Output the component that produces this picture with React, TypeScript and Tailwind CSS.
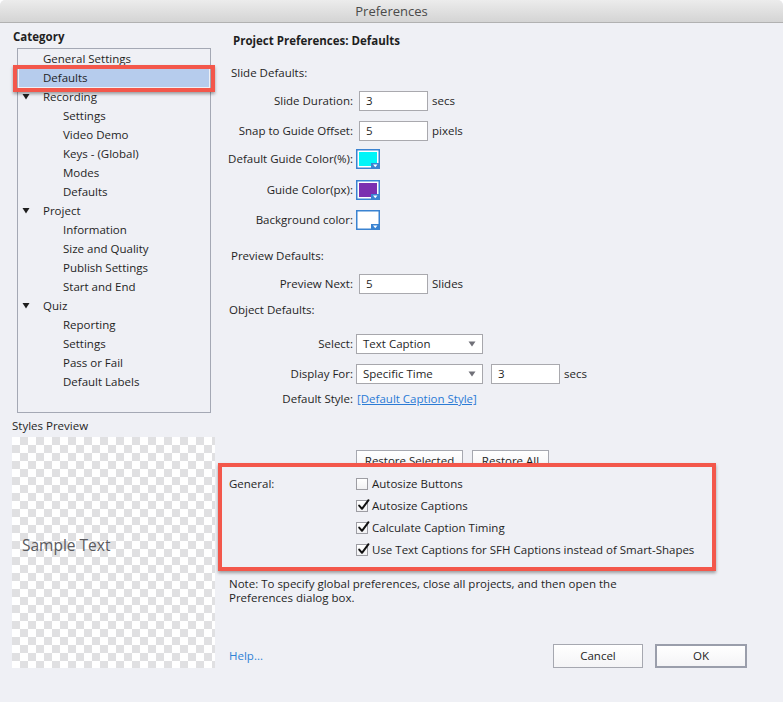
import React from "react";

type TreeItem = { label: string; level: 1 | 2; parent?: boolean; selected?: boolean };

const tree: TreeItem[] = [
  { label: "General Settings", level: 1 },
  { label: "Defaults", level: 1, selected: true },
  { label: "Recording", level: 1, parent: true },
  { label: "Settings", level: 2 },
  { label: "Video Demo", level: 2 },
  { label: "Keys - (Global)", level: 2 },
  { label: "Modes", level: 2 },
  { label: "Defaults", level: 2 },
  { label: "Project", level: 1, parent: true },
  { label: "Information", level: 2 },
  { label: "Size and Quality", level: 2 },
  { label: "Publish Settings", level: 2 },
  { label: "Start and End", level: 2 },
  { label: "Quiz", level: 1, parent: true },
  { label: "Reporting", level: 2 },
  { label: "Settings", level: 2 },
  { label: "Pass or Fail", level: 2 },
  { label: "Default Labels", level: 2 },
];

function Triangle() {
  return (
    <svg width="8" height="7" viewBox="0 0 8 7" className="block">
      <path d="M0.5 1 H7.5 L4 6.5 Z" fill="#1e1e1e" />
    </svg>
  );
}

function Swatch({ color }: { color: string }) {
  return (
    <svg width="24" height="20" viewBox="0 0 24 20" className="block">
      <rect x="0.75" y="0.75" width="22.5" height="18.5" fill="#ffffff" stroke="#3a83d1" strokeWidth="1.5" />
      <rect x="3" y="3" width="18" height="14" fill={color} />
      <rect x="15" y="14" width="8.5" height="5.5" fill="#3a83d1" />
      <path d="M17 15.5 H21.5 L19.25 18.2 Z" fill="#ffffff" />
    </svg>
  );
}

function TextInput({ value, w = "w-[69px]" }: { value: string; w?: string }) {
  return (
    <div className={`h-[20px] ${w} border border-[#a9a9ae] bg-white pl-[6px] flex items-center leading-none`}>
      {value}
    </div>
  );
}

function Dropdown({ value }: { value: string }) {
  return (
    <div className="h-[20px] w-[127px] border border-[#a7a7ac] bg-white pl-[6px] pr-[6px] flex items-center justify-between leading-none">
      <span>{value}</span>
      <svg width="8" height="6" viewBox="0 0 8 6" className="block">
        <path d="M0.5 0.5 H7.5 L4 5.5 Z" fill="#707078" />
      </svg>
    </div>
  );
}

function Checkbox({ checked }: { checked: boolean }) {
  return (
    <div className="relative w-[12px] h-[12px] border border-[#9d9da3] bg-gradient-to-b from-white to-[#f1f1f3]">
      {checked && (
        <svg width="14" height="14" viewBox="0 0 14 14" className="absolute left-[0px] top-[-3px]">
          <path d="M2.2 7.6 L5 10.8 L11.5 2.2" fill="none" stroke="#111" strokeWidth="2" strokeLinecap="round" strokeLinejoin="round" />
        </svg>
      )}
    </div>
  );
}

function Label({ children }: { children: React.ReactNode }) {
  return <div className="w-[136px] text-right pr-[1px] shrink-0">{children}</div>;
}

function Button({ children, w, strong }: { children: React.ReactNode; w: string; strong?: boolean }) {
  return (
    <div
      className={`${w} h-[24px] flex items-center justify-center bg-gradient-to-b from-white to-[#f4f4f6] ${
        strong ? "border-2 border-[#9a9eab]" : "border border-[#a6a8b0]"
      }`}
    >
      {children}
    </div>
  );
}

export default function App() {
  return (
    <div className="w-[783px] h-[702px] bg-white font-['Open_Sans',sans-serif] text-[11.5px] text-[#1f1f1f] leading-[16px] overflow-hidden">
      <div className="w-full h-full bg-[#eff0f5] rounded-t-[5px] flex flex-col overflow-hidden">
        {/* Title bar */}
        <div className="h-[23px] shrink-0 bg-gradient-to-b from-[#ececec] to-[#d4d4d4] border-b border-[#b1b1b1] flex items-center justify-center text-[13px] text-[#4a4a4a] rounded-t-[5px]">
          Preferences
        </div>

        <div className="flex flex-1">
          {/* Left column */}
          <div className="w-[218px] shrink-0 flex flex-col">
            <div className="ml-[13px] mt-[6px] h-[16px] font-bold">Category</div>
            <div className="ml-[17px] mt-[3px] w-[194px] h-[365px] border border-[#a4a8b4] pt-0">
              {tree.map((item, i) => (
                <div key={i} className="relative h-[19px] flex items-center">
                  {item.selected && (
                    <>
                      <div className="absolute left-[1px] right-[1px] top-0 bottom-0 bg-[#b6cced]" />
                      <div className="absolute left-[-5px] w-[202px] top-[-3px] h-[27px] border-[4px] border-[#f3574b] shadow-[0_2px_3px_rgba(0,0,0,0.35)]" />
                    </>
                  )}
                  <div className="relative flex items-center">
                    <div className="w-[25px] pl-[4px] flex items-center">{item.parent && <Triangle />}</div>
                    {item.level === 2 && <div className="w-[20px]" />}
                    <span>{item.label}</span>
                  </div>
                </div>
              ))}
            </div>
            <div className="ml-[12px] mt-[5px] h-[16px]">Styles Preview</div>
            <div className="ml-[12px] mt-[3px] w-[203px] h-[231px] bg-[conic-gradient(#e0e0e2_25%,#ffffff_0_50%,#e0e0e2_0_75%,#ffffff_0)] bg-[length:16px_16px] pl-[10px] pt-[96px]">
              <div className="text-[15.5px] leading-[24px] text-[#5a5a5e]">Sample Text</div>
            </div>
          </div>

          {/* Right column */}
          <div className="flex-1 flex flex-col">
            <div className="ml-[15px] mt-[10px] h-[16px] font-bold">Project Preferences: Defaults</div>

            <div className="ml-[13px] mt-[16px] h-[16px]">Slide Defaults:</div>

            <div className="mt-[10px] h-[20px] flex items-center">
              <Label>Slide Duration:</Label>
              <div className="ml-[5px]"><TextInput value="3" /></div>
              <span className="ml-[4px]">secs</span>
            </div>
            <div className="mt-[10px] h-[20px] flex items-center">
              <Label>Snap to Guide Offset:</Label>
              <div className="ml-[5px]"><TextInput value="5" /></div>
              <span className="ml-[4px]">pixels</span>
            </div>
            <div className="mt-[8px] h-[20px] flex items-center">
              <Label>Default Guide Color(%):</Label>
              <div className="ml-[2px]"><Swatch color="#00f5f8" /></div>
            </div>
            <div className="mt-[11px] h-[20px] flex items-center">
              <Label>Guide Color(px):</Label>
              <div className="ml-[2px]"><Swatch color="#7b2fb0" /></div>
            </div>
            <div className="mt-[10px] h-[20px] flex items-center">
              <Label>Background color:</Label>
              <div className="ml-[2px]"><Swatch color="#ffffff" /></div>
            </div>

            <div className="ml-[13px] mt-[18px] h-[16px]">Preview Defaults:</div>
            <div className="mt-[10px] h-[20px] flex items-center">
              <Label>Preview Next:</Label>
              <div className="ml-[5px]"><TextInput value="5" /></div>
              <span className="ml-[4px]">Slides</span>
            </div>

            <div className="ml-[11px] mt-[8px] h-[16px]">Object Defaults:</div>
            <div className="mt-[16px] h-[20px] flex items-center">
              <Label>Select:</Label>
              <div className="ml-[2px]"><Dropdown value="Text Caption" /></div>
            </div>
            <div className="mt-[10px] h-[20px] flex items-center">
              <Label>Display For:</Label>
              <div className="ml-[2px]"><Dropdown value="Specific Time" /></div>
              <div className="ml-[8px]"><TextInput value="3" /></div>
              <span className="ml-[4px]">secs</span>
            </div>
            <div className="mt-[7px] h-[16px] flex items-center">
              <Label>Default Style:</Label>
              <span className="ml-[3px] text-[#2b7bd5] underline">[Default Caption Style]</span>
            </div>

            <div className="mt-[43px] h-[21px] flex">
              <div className="ml-[138px] w-[107px] h-[21px] border border-[#a6a8b0] bg-gradient-to-b from-white to-[#f4f4f6] flex items-center justify-center">
                Restore Selected
              </div>
              <div className="ml-[9px] w-[77px] h-[21px] border border-[#a6a8b0] bg-gradient-to-b from-white to-[#f4f4f6] flex items-center justify-center">
                Restore All
              </div>
            </div>

            <div className="relative z-10 mt-[-8px] w-[498px] h-[108px] border-[4px] border-[#f3574b] bg-[#eff0f5] shadow-[0_2px_3px_rgba(0,0,0,0.35)] pt-[6px] flex">
              <div className="w-[134px] pl-[7px] h-[22px] flex items-center shrink-0">General:</div>
              <div className="flex flex-col">
                {[
                  { c: false, t: "Autosize Buttons" },
                  { c: true, t: "Autosize Captions" },
                  { c: true, t: "Calculate Caption Timing" },
                  { c: true, t: "Use Text Captions for SFH Captions instead of Smart-Shapes" },
                ].map((r, i) => (
                  <div key={i} className="h-[22px] flex items-center">
                    <Checkbox checked={r.c} />
                    <span className="ml-[4px]">{r.t}</span>
                  </div>
                ))}
              </div>
            </div>

            <div className="ml-[11px] mt-[6px] leading-[14px]">
              Note: To specify global preferences, close all projects, and then open the
              <br />
              Preferences dialog box.
            </div>

            <div className="mt-[39px] h-[24px] flex items-center">
              <span className="ml-[11px] text-[#2f82d5]">Help...</span>
              <div className="ml-auto mr-[36px] flex gap-[12px]">
                <Button w="w-[90px]">Cancel</Button>
                <Button w="w-[92px]" strong>
                  OK
                </Button>
              </div>
            </div>
          </div>
        </div>
      </div>
    </div>
  );
}
